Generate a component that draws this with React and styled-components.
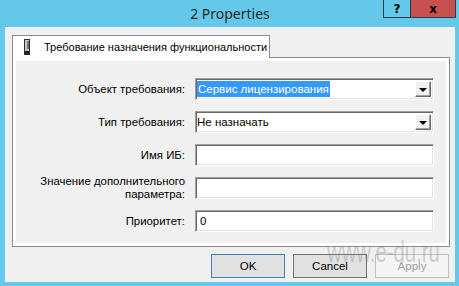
import React from 'react'
import styled, { createGlobalStyle } from 'styled-components'

const GlobalStyle = createGlobalStyle`
    html, body {
        margin: 0;
        padding: 0;
        background: #63c8ea;
    }
    body {
        font-family: "Liberation Sans", Arial, sans-serif;
    }
`

const Window = styled.div`
    position: relative;
    width: 459px;
    height: 286px;
    background: #63c8ea;
    display: flex;
    flex-direction: column;
    overflow: hidden;
`

const TitleBar = styled.div`
    height: 27px;
    display: flex;
    align-items: flex-start;
`

const Title = styled.div`
    flex: 1;
    text-align: center;
    font-family: "Noto Sans", "Open Sans", sans-serif;
    font-size: 14px;
    line-height: 27px;
    color: #1f2a1f;
    padding-left: 77px;
`

const Controls = styled.div`
    display: flex;
    margin-right: 3px;
`

const CtrlButton = styled.div`
    width: ${p => p.$w}px;
    height: 18px;
    box-sizing: border-box;
    border: 1px solid #2b3a42;
    border-top: none;
    border-left: ${p => (p.$first ? '1px solid #2b3a42' : 'none')};
    background: ${p => p.$bg};
    display: flex;
    align-items: center;
    justify-content: center;
    font-family: "DejaVu Sans", sans-serif;
    font-weight: bold;
    font-size: 12px;
    color: #000;
`

const Client = styled.div`
    flex: 1;
    margin: 0 4px 4px 5px;
    background: #f0f0f0;
    display: flex;
    flex-direction: column;
    padding: 8px 5px 0 7px;
`

const TabStrip = styled.div`
    display: flex;
    height: 23px;
    position: relative;
    z-index: 1;
`

const Tab = styled.div`
    width: 258px;
    box-sizing: border-box;
    border: 1px solid #898c95;
    border-bottom: none;
    background: #fff;
    display: flex;
    align-items: center;
    gap: 13px;
    padding-left: 11px;
    font-size: 11px;
    white-space: nowrap;
    color: #000;
`

const Panel = styled.div`
    height: 190px;
    box-sizing: border-box;
    border: 1px solid #898c95;
    background: #fff;
    padding: 3px;
    margin-top: -1px;
    display: flex;
`

const PanelBody = styled.div`
    flex: 1;
    background: #f0f0f0;
    display: flex;
    flex-direction: column;
    gap: 11px;
    padding-top: 17px;
`

const Row = styled.div`
    display: flex;
    align-items: center;
    height: 22px;
`

const Label = styled.div`
    width: 169px;
    text-align: right;
    font-size: 11.4px;
    line-height: 13px;
    color: #000;
    margin-right: 10px;
    white-space: nowrap;
`

const Field = styled.div`
    width: 239px;
    height: 22px;
    box-sizing: border-box;
    background: #fff;
    border-style: solid;
    border-width: 1px;
    border-color: #a0a0a0 #fff #fff #a0a0a0;
    box-shadow: inset 1px 1px 0 #696969, inset -1px -1px 0 #e3e3e3;
    display: flex;
    align-items: center;
    padding: 2px 2px 2px ${p => p.$pad || 1}px;
    font-size: 11.5px;
    color: #000;
`

const Value = styled.span`
    flex: 1;
    display: flex;
    align-items: center;
    white-space: nowrap;
`

const Selected = styled.span`
    background: #3399ff;
    color: #fff;
    padding: 2px 1px;
    line-height: 12px;
`

const DropButton = styled.div`
    width: 16px;
    height: 16px;
    box-sizing: border-box;
    background: #f0f0f0;
    border-style: solid;
    border-width: 1px;
    border-color: #fff #696969 #696969 #fff;
    box-shadow: inset -1px -1px 0 #a0a0a0;
    display: flex;
    align-items: center;
    justify-content: center;
    &::after {
        content: '';
        border-left: 4px solid transparent;
        border-right: 4px solid transparent;
        border-top: 4px solid #000;
        margin-top: 1px;
    }
`

const ButtonRow = styled.div`
    display: flex;
    justify-content: flex-end;
    gap: 8px;
    padding: 7px 1px 0 0;
`

const Button = styled.div`
    width: 74px;
    height: 24px;
    box-sizing: border-box;
    border: 1px solid ${p => (p.$default ? '#3c7fb1' : p.$disabled ? '#bfbfbf' : '#707070')};
    background: ${p => (p.$disabled ? '#f4f4f4' : '#e1e1e1')};
    color: ${p => (p.$disabled ? '#a0a0a0' : '#000')};
    font-size: 11.5px;
    display: flex;
    align-items: center;
    justify-content: center;
`

const Watermark = styled.div`
    position: absolute;
    left: 327px;
    top: 236px;
    font-family: "Liberation Sans", Arial, sans-serif;
    font-size: 29px;
    white-space: nowrap;
    color: rgba(130, 130, 130, 0.35);
    transform: scaleX(0.7);
    transform-origin: left top;
    pointer-events: none;
`

function TabIcon() {
    return (
        <svg width="7" height="16" viewBox="0 0 7 16">
            <rect x="0.5" y="0.5" width="5" height="15" fill="#c8c8c8" stroke="#303030" />
            <rect x="1" y="12" width="4" height="3" fill="#202020" />
            <path d="M3 3h2M3 5h2M3 7h2M3 9h2" stroke="#202020" />
            <path d="M1 2h1M1 10h1" stroke="#d8d020" />
        </svg>
    )
}

const rows = [
    { label: 'Объект требования:', combo: true, selected: true, value: 'Сервис лицензирования' },
    { label: 'Тип требования:', combo: true, value: 'Не назначать' },
    { label: 'Имя ИБ:', value: '' },
    { label: <>Значение дополнительного<br />параметра:</>, value: '' },
    { label: 'Приоритет:', value: '0', pad: 4 },
]

export default function App() {
    return (
        <Window>
            <GlobalStyle />
            <TitleBar>
                <Title>2 Properties</Title>
                <Controls>
                    <CtrlButton $w={28} $bg="#63c8ea" $first>?</CtrlButton>
                    <CtrlButton $w={45} $bg="#c75050">x</CtrlButton>
                </Controls>
            </TitleBar>
            <Client>
                <TabStrip>
                    <Tab>
                        <TabIcon />
                        Требование назначения функциональности
                    </Tab>
                </TabStrip>
                <Panel>
                    <PanelBody>
                        {rows.map((r, i) => (
                            <Row key={i}>
                                <Label>{r.label}</Label>
                                <Field $pad={r.pad}>
                                    <Value>
                                        {r.selected ? <Selected>{r.value}</Selected> : r.value}
                                    </Value>
                                    {r.combo && <DropButton />}
                                </Field>
                            </Row>
                        ))}
                    </PanelBody>
                </Panel>
                <ButtonRow>
                    <Button $default>OK</Button>
                    <Button>Cancel</Button>
                    <Button $disabled>Apply</Button>
                </ButtonRow>
            </Client>
            <Watermark>www.e-du.ru</Watermark>
        </Window>
    )
}
